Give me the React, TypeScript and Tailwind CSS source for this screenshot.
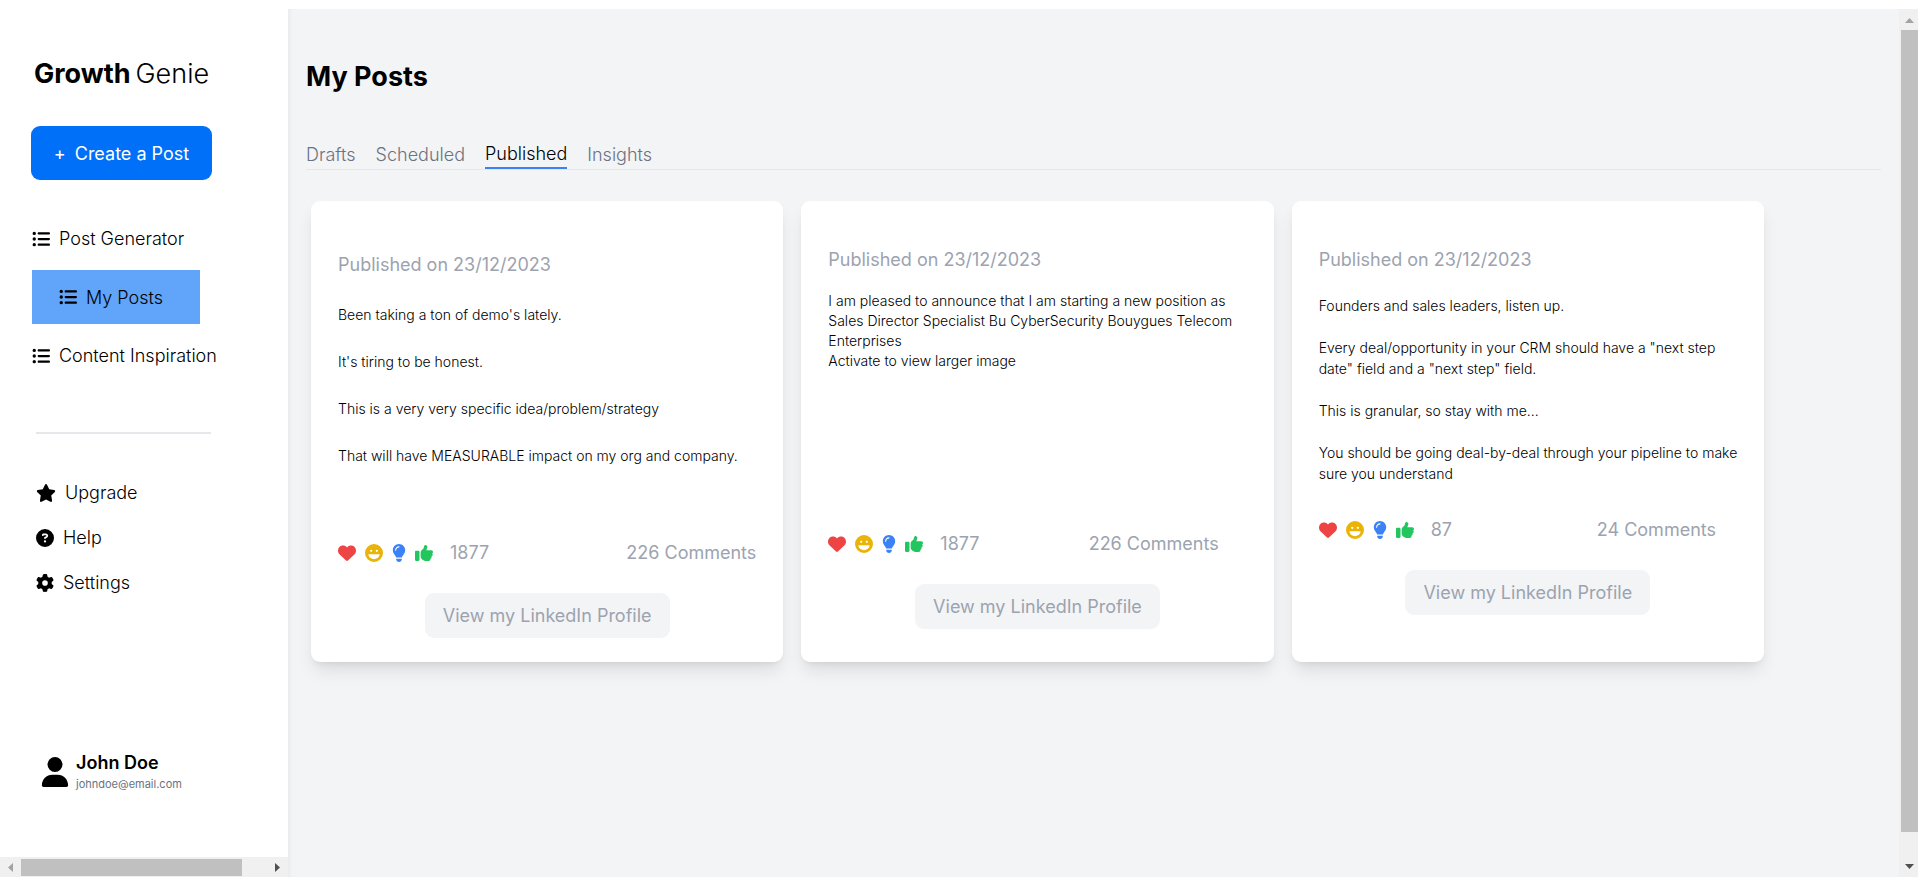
import React from "react";
import {
  FaListUl,
  FaStar,
  FaCircleQuestion,
  FaGear,
  FaHeart,
  FaFaceLaugh,
  FaLightbulb,
  FaThumbsUp,
  FaUser,
} from "react-icons/fa6";

type Post = {
  paragraphs: string[][];
  likes: string;
  comments: string;
  top: string;
  bodyClass: string;
  statsClass: string;
};

const posts: Post[] = [
  {
    paragraphs: [
      ["Been taking a ton of demo's lately."],
      ["It's tiring to be honest."],
      ["This is a very very specific idea/problem/strategy"],
      ["That will have MEASURABLE impact on my org and company."],
    ],
    likes: "1877",
    comments: "226 Comments",
    top: "pt-[50px]",
    bodyClass: "mt-[27px] h-[234px] gap-[27px] leading-5",
    statsClass: "",
  },
  {
    paragraphs: [
      [
        "I am pleased to announce that I am starting a new position as Sales Director Specialist Bu CyberSecurity Bouygues Telecom Enterprises",
        "Activate to view larger image",
      ],
    ],
    likes: "1877",
    comments: "226 Comments",
    top: "pt-[45px]",
    bodyClass: "mt-[18px] h-[239px] leading-5",
    statsClass: "pr-7",
  },
  {
    paragraphs: [
      ["Founders and sales leaders, listen up."],
      ['Every deal/opportunity in your CRM should have a "next step date" field and a "next step" field.'],
      ["This is granular, so stay with me..."],
      ["You should be going deal-by-deal through your pipeline to make sure you understand"],
    ],
    likes: "87",
    comments: "24 Comments",
    top: "pt-[45px]",
    bodyClass: "-mr-2 mt-[22px] h-[221px] gap-[21px] leading-[21px]",
    statsClass: "pr-[21px]",
  },
];

function PostCard({ post }: { post: Post }) {
  return (
    <article className={`flex h-[461px] min-w-0 flex-col rounded-[9px] bg-white px-[27px] shadow-[0_11px_17px_-3px_rgba(0,0,0,0.1),0_4px_7px_-4px_rgba(0,0,0,0.1)] ${post.top}`}>
      <p className="text-[#9ca3af]">Published on 23/12/2023</p>
      <div className={`flex flex-col text-[14px] font-light ${post.bodyClass}`}>
        {post.paragraphs.map((lines) => (
          <p key={lines[0]}>
            {lines.map((line) => (
              <span key={line} className="block">{line}</span>
            ))}
          </p>
        ))}
      </div>
      <div className={`flex items-center justify-between text-[#9ca3af] ${post.statsClass}`}>
        <div className="flex items-center gap-[9px]">
          <FaHeart className="text-[#ef4444]" />
          <FaFaceLaugh className="text-[#eab308]" />
          <FaLightbulb className="-mx-[2px] text-[#3b82f6]" />
          <FaThumbsUp className="text-[#22c55e]" />
          <span className="ml-2">{post.likes}</span>
        </div>
        <span>{post.comments}</span>
      </div>
      <button type="button" className="mt-[27px] self-center rounded-[9px] bg-[#f3f4f6] px-[18px] py-[9px] text-[#9ca3af]">
        View my LinkedIn Profile
      </button>
    </article>
  );
}

function Sidebar() {
  return (
    <aside className="flex w-72 shrink-0 flex-col bg-white">
      <div className="flex flex-1 flex-col">
        <div className="mt-14 ml-[34px] flex gap-[5px] text-[27px] leading-9">
          <span className="font-bold">Growth</span> <span className="font-light">Genie</span>
        </div>
        <button type="button" className="mt-[34px] ml-[31px] flex h-[54px] w-[181px] items-center justify-center gap-[9px] rounded-[9px] bg-[#0070f8] text-white">
          <span>+</span>
          <span>Create a Post</span>
        </button>
        <nav className="mt-[45px] flex flex-col items-start pl-8 font-light" aria-label="Posts">
          <a href="#generator" className="flex items-center gap-[9px]"><FaListUl />Post Generator</a>
          <a href="#posts" className="mt-[18px] flex h-[54px] w-[168px] items-center gap-[9px] bg-[#60a5fa] pl-[27px]"><FaListUl />My Posts</a>
          <a href="#inspiration" className="mt-[18px] flex items-center gap-[9px]"><FaListUl />Content Inspiration</a>
        </nav>
        <hr className="mt-[63px] ml-9 w-[175px] border-t-2 border-[#e5e7eb]" />
        <nav className="mt-[45px] flex flex-col items-start gap-[18px] pl-9 font-light" aria-label="Account">
          <a href="#upgrade" className="flex items-center gap-[9px]"><FaStar className="text-[20px]" />Upgrade</a>
          <a href="#help" className="flex items-center gap-[9px]"><FaCircleQuestion />Help</a>
          <a href="#settings" className="flex items-center gap-[9px]"><FaGear />Settings</a>
        </nav>
        <div className="mt-auto mb-16 ml-10 flex items-center">
          <FaUser className="text-[30px]" />
          <div className="ml-[6px]">
            <p className="leading-6 font-semibold">John Doe</p>
            <p className="text-[11px] leading-[18px] text-[#6b7280]">johndoe@email.com</p>
          </div>
        </div>
      </div>
      <div className="flex h-5 items-center bg-[#f0f0f0] pr-2 pl-2" aria-hidden="true">
        <svg className="h-[9px] w-[5px] shrink-0" viewBox="0 0 5 9"><path d="M5 0v9L0 4.500z" fill="#a3a3a3" /></svg>
        <div className="ml-2 h-[17px] w-[221px] bg-[#c0c0c0]" />
        <svg className="ml-auto h-[9px] w-[5px] shrink-0" viewBox="0 0 5 9"><path d="M0 0v9l5-4.500z" fill="#505050" /></svg>
      </div>
    </aside>
  );
}

const tabs = ["Drafts", "Scheduled", "Published", "Insights"];

export default function App() {
  return (
    <div className="flex h-screen min-h-[700px] bg-white font-['Inter',sans-serif] text-[18px] leading-[27px] text-black">
      <Sidebar />
      <div className="flex min-w-0 flex-1 pt-[9px]">
        <main className="min-w-0 flex-1 bg-[#f3f4f6] px-[18px] shadow-[inset_4px_0_5px_-3px_rgba(0,0,0,0.06)]">
          <h1 className="pt-[50px] text-[27px] leading-9 font-bold">My Posts</h1>
          <div className="mt-[45px] flex items-end gap-5 border-b border-[#e5e7eb] font-light text-[#6b7280]" role="tablist">
            {tabs.map((tab) => (
              <button
                key={tab}
                type="button"
                role="tab"
                aria-selected={tab === "Published"}
                className={tab === "Published" ? "border-b-2 border-[#3b82f6] text-black" : "pb-px"}
              >
                {tab}
              </button>
            ))}
          </div>
          <div className="mt-[31px] grid grid-cols-3 gap-[18px] pr-[117px] pl-[5px]">
            {posts.map((post) => (
              <PostCard key={post.paragraphs[0][0]} post={post} />
            ))}
          </div>
        </main>
        <div className="flex w-[19px] shrink-0 flex-col items-center bg-[#f0f0f0] pt-[9px] pb-2 pl-[2px]" aria-hidden="true">
          <svg className="h-[5px] w-[9px] shrink-0" viewBox="0 0 9 5"><path d="M0 5h9L4.500 0z" fill="#a3a3a3" /></svg>
          <div className="mt-[7px] mb-8 w-full flex-1 bg-[#c0c0c0]" />
          <svg className="h-[5px] w-[9px] shrink-0" viewBox="0 0 9 5"><path d="M0 0h9L4.500 5z" fill="#505050" /></svg>
        </div>
      </div>
    </div>
  );
}
